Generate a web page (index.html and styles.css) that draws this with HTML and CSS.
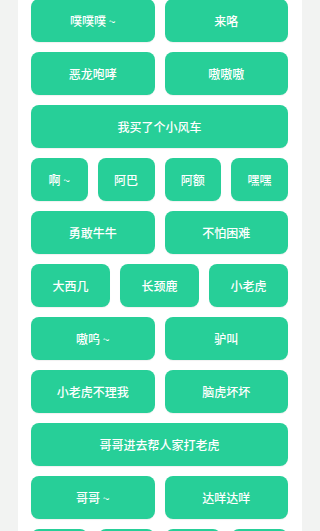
FILE: index.html
```html
<!DOCTYPE html>
<html lang="zh-CN">
<head>
<meta charset="utf-8">
<title>声音</title>
<link rel="stylesheet" href="styles.css">
</head>
<body>
<div class="panel">
  <div class="row"><div class="btn">噗噗噗 ~</div><div class="btn">来咯</div></div>
  <div class="row"><div class="btn">恶龙咆哮</div><div class="btn">嗷嗷嗷</div></div>
  <div class="row"><div class="btn">我买了个小风车</div></div>
  <div class="row"><div class="btn">啊 ~</div><div class="btn">阿巴</div><div class="btn">阿额</div><div class="btn">嘿嘿</div></div>
  <div class="row"><div class="btn">勇敢牛牛</div><div class="btn">不怕困难</div></div>
  <div class="row"><div class="btn">大西几</div><div class="btn">长颈鹿</div><div class="btn">小老虎</div></div>
  <div class="row"><div class="btn">嗷呜 ~</div><div class="btn">驴叫</div></div>
  <div class="row"><div class="btn">小老虎不理我</div><div class="btn">脑虎坏坏</div></div>
  <div class="row"><div class="btn">哥哥进去帮人家打老虎</div></div>
  <div class="row"><div class="btn">哥哥 ~</div><div class="btn">达咩达咩</div></div>
  <div class="row"><div class="btn"></div><div class="btn"></div><div class="btn"></div><div class="btn"></div></div>
</div>
</body>
</html>
```

FILE: styles.css
```css
html, body {
  margin: 0;
  padding: 0;
  background: #f2f3f2;
}
body {
  font-family: "Noto Sans CJK SC", "Noto Sans", sans-serif;
  height: 531px;
  overflow: hidden;
}
.panel {
  margin: -1px 18px 0 18px;
  background: #ffffff;
  padding: 0 14px 0 13px;
  display: flex;
  flex-direction: column;
  gap: 10px;
}
.row {
  display: flex;
  gap: 10px;
}
.btn {
  flex: 1 1 0;
  height: 43px;
  border-radius: 8px;
  background: #27cf98;
  color: #ffffff;
  font-size: 12px;
  font-weight: 500;
  display: flex;
  align-items: center;
  justify-content: center;
  box-shadow: 0 1px 1px rgba(0, 0, 0, 0.06);
}
```
